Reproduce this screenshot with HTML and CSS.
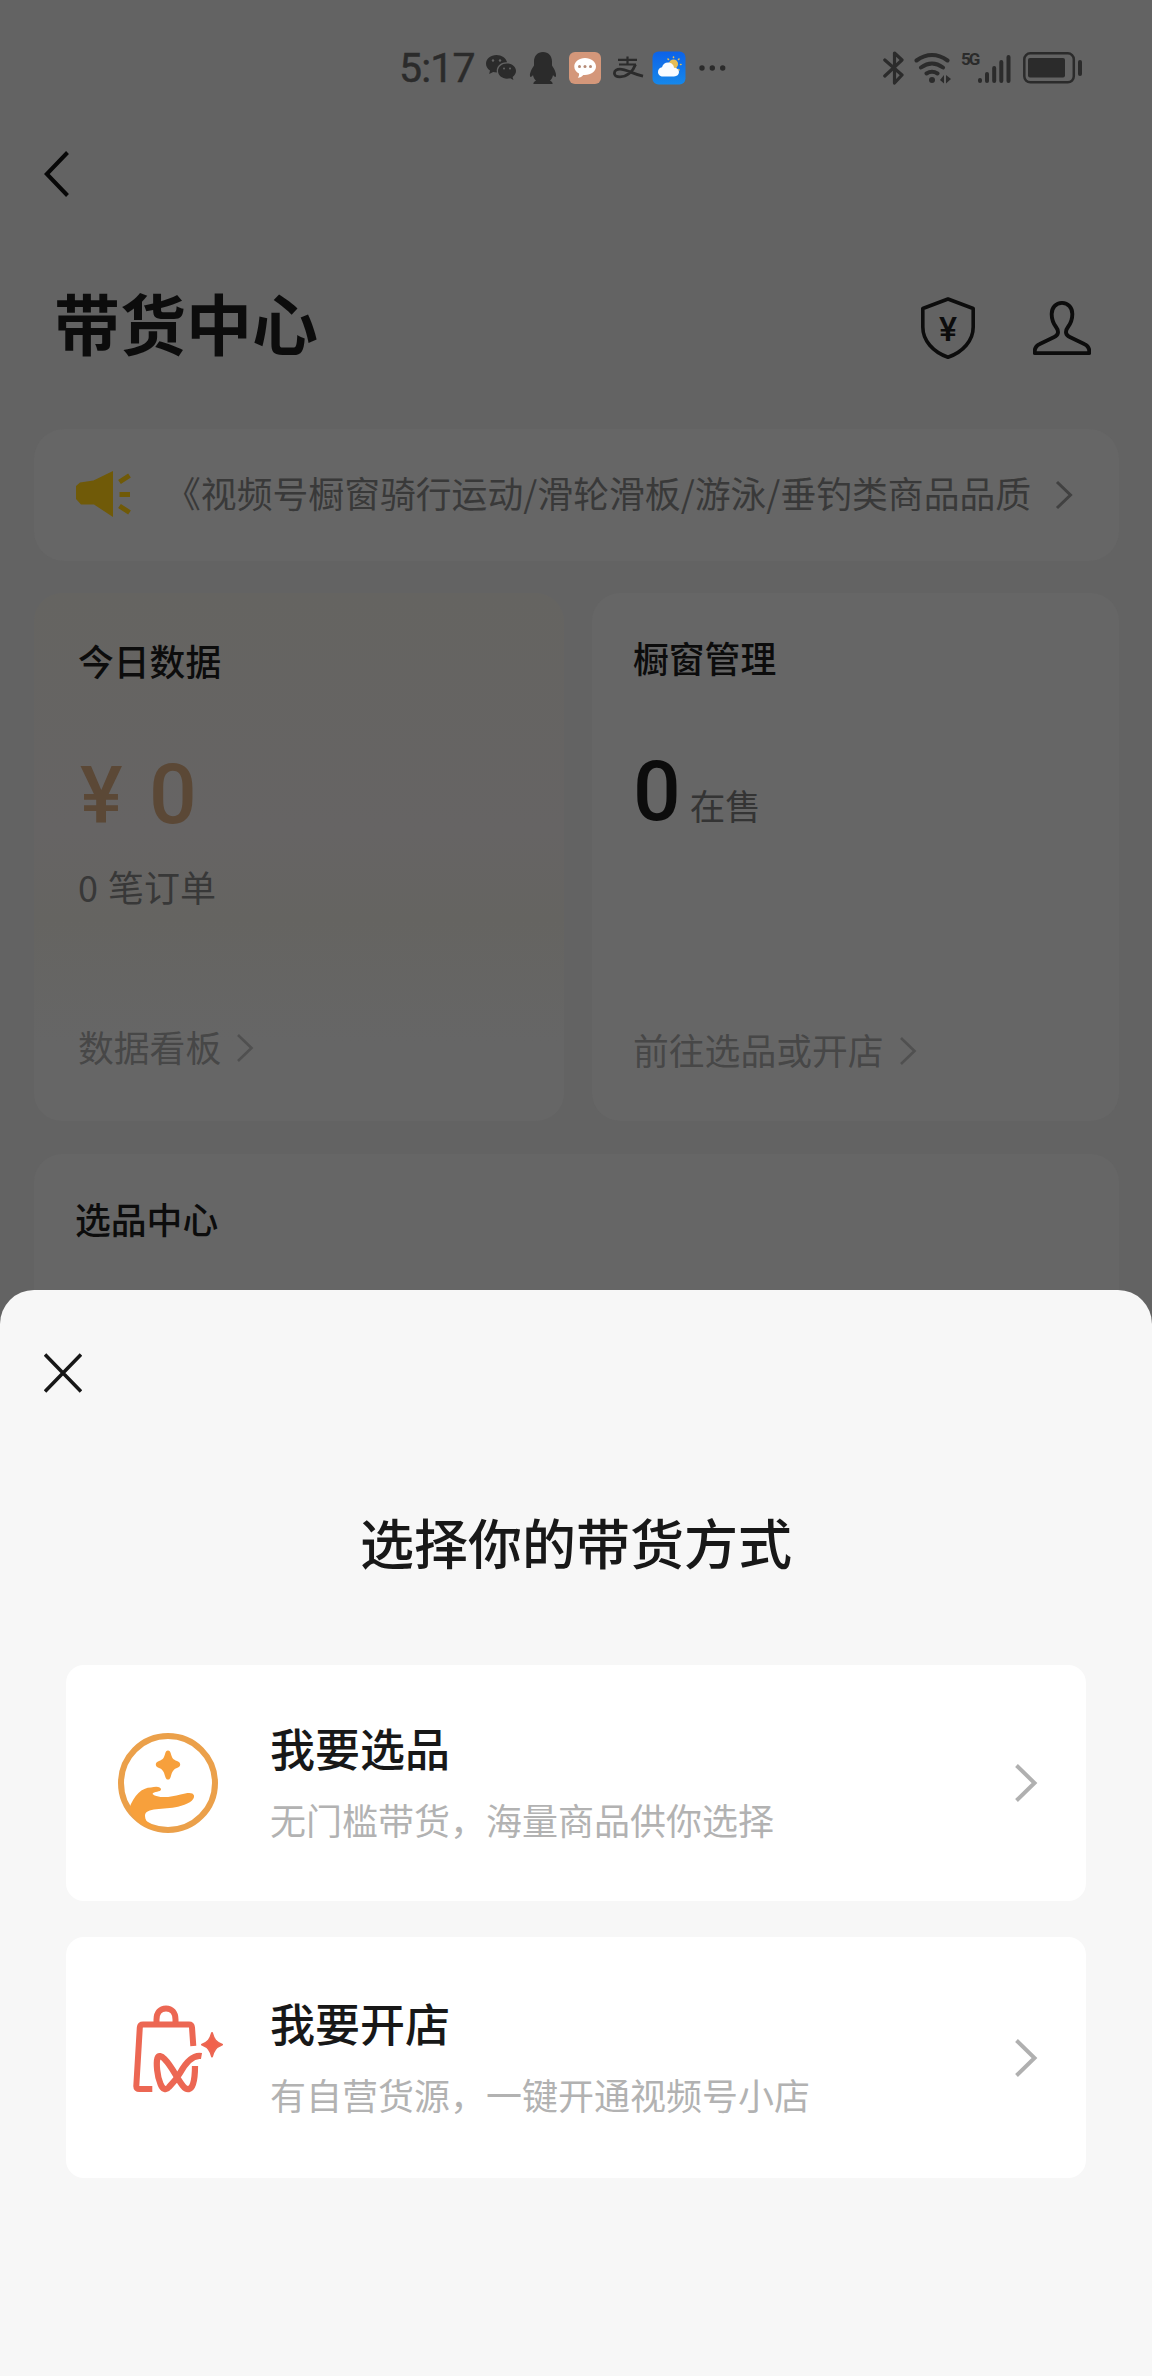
FILE: index.html
```html
<!DOCTYPE html>
<html lang="zh-CN">
<head>
<meta charset="utf-8">
<title>带货中心</title>
<link rel="stylesheet" href="styles.css">
</head>
<body>
<main class="page">
  <header class="status">
    <div class="status-left">
      <span class="time">5:17</span>
      <svg class="s-wechat" width="30" height="28" viewBox="0 0 30 28"><path fill="#2b2b2b" d="M10.500 1C4.700 1 0 4.800 0 9.700c0 2.800 1.600 5.200 4 6.800L3.200 20l4-2c1.200.3 2.300.4 3.700.4-1.200-6 3.800-10.600 10.200-10.200C20 4 15.600 1 10.500 1z"/><path fill="#2b2b2b" d="M21 9.500c-5 0-9 3.400-9 7.600s4 7.600 9 7.600c1.100 0 2.200-.2 3.200-.5l3.200 1.800-.8-3c2-1.400 3.400-3.500 3.400-5.900 0-4.200-4-7.600-9-7.600z"/><g fill="#636363"><circle cx="7" cy="6.500" r="1.200"/><circle cx="14" cy="6.500" r="1.200"/><circle cx="18" cy="14.500" r="1"/><circle cx="24" cy="14.500" r="1"/></g></svg>
      <svg class="s-qq" width="28" height="34" viewBox="0 0 28 34"><path fill="#2b2b2b" d="M14 1C8.500 1 5 5 5 10.500v4C3 17.500.500 22 1 25c.3 2 2 .5 3-1 .4 2.300 1.400 4.200 3 5.700-1.700.6-2.600 1.500-2.600 3.300H23.600c0-1.800-.9-2.700-2.600-3.300 1.600-1.500 2.600-3.400 3-5.700 1 1.500 2.700 3 3 1 .5-3-2-7.500-4-10.500v-4C23 5 19.500 1 14 1z"/></svg>
      <svg class="s-chat" width="32" height="32" viewBox="0 0 32 32"><rect width="32" height="32" rx="6" fill="#d4977a"/><path fill="#fff" d="M16 6C10 6 5.300 9.800 5.300 14.500c0 3 1.700 5.600 4.700 7.100.3 1.500-.2 3-1.200 4.100 2.500-.2 4.300-1.200 5.500-2.800 7.200.6 12.700-3.300 12.700-8.400C27 9.800 22 6 16 6z"/><g fill="#b58a75"><circle cx="10.500" cy="14.500" r="1.500"/><circle cx="16" cy="14.500" r="1.500"/><circle cx="21.500" cy="14.500" r="1.500"/></g></svg>
      <svg class="s-pay" width="31" height="24" viewBox="0 0 31 24" fill="none" stroke="#2b2b2b"><path stroke-width="2.200" d="M5 3.800h19M14.500 .5v8M6 8.500h17"/><path stroke-width="2.800" d="M22.500 8.500C20 15.500 14 20.800 7 20.800c-4 0-5.600-1.600-5.600-3.600C1.400 14.500 4 13.200 7 13.200c6 0 12 4.300 23 7"/></svg>
      <svg class="s-weather" width="34" height="34" viewBox="0 0 34 34"><defs><linearGradient id="sky" x1="0" y1="0" x2="0" y2="1"><stop offset="0" stop-color="#0c62e8"/><stop offset="1" stop-color="#1688ea"/></linearGradient></defs><rect x=".5" y=".5" width="33" height="33" rx="6" fill="url(#sky)"/><circle cx="21.500" cy="13" r="4.600" fill="#e5bd55"/><g stroke="#e5bd55" stroke-width="1.600" stroke-linecap="round"><path d="M21.500 6.500V6M26.500 8.500l.5-.5M16.500 8.500L16 8M28.500 13.500h.5M26.500 18.500l.5.500"/></g><path fill="#f7fbff" d="M11 25.500c-3 0-5-2-5-4.600 0-2.400 1.700-4.300 4-4.600.8-3 3-4.800 6-4.800 3.200 0 5.700 2.200 6 5.200 3 0 5 1.900 5 4.400s-2 4.400-5 4.400z"/></svg>
      <svg class="s-more" width="27" height="6" viewBox="0 0 27 6" fill="#2b2b2b"><circle cx="3" cy="3" r="2.700"/><circle cx="13.300" cy="3" r="2.700"/><circle cx="23.700" cy="3" r="2.700"/></svg>
    </div>
    <div class="status-right">
      <svg class="s-bt" width="22" height="34" viewBox="0 0 22 34" fill="none" stroke="#2b2b2b" stroke-width="3.200" stroke-linecap="round" stroke-linejoin="round"><path d="M1.800 9L19 24l-7.500 8V2L19 9 1.800 25"/></svg>
      <svg class="s-wifi" width="37" height="32" viewBox="0 0 37 32" fill="none" stroke="#2b2b2b" stroke-width="4" stroke-linecap="round"><path d="M2.500 8.500Q18 -2.500 33.500 8.500M7 15.500Q18 7.500 29 15.500M12.500 21.500Q18 18 23.500 21.500"/><circle cx="18" cy="28" r="3" fill="#2b2b2b" stroke="none"/><path fill="#2b2b2b" stroke="none" d="M30 23v8.500L26 28zM32 23v8.500l5-4.500z"/></svg>
      <div class="s-signal"><span class="net">5G</span><svg width="34" height="34" viewBox="0 0 34 34"><g stroke="#2b2b2b" stroke-width="4" stroke-linecap="round"><path d="M2 30v-1M9 30v-7M16.200 30V17M23.300 30V11M30.500 30V6"/></g></svg></div>
      <svg class="s-battery" width="60" height="32" viewBox="0 0 60 32"><rect x="1.300" y="1.300" width="49.500" height="29" rx="6" fill="none" stroke="#2b2b2b" stroke-width="2.500"/><rect x="5" y="6" width="37" height="19.500" rx="2" fill="#2b2b2b"/><path d="M57 10v12" stroke="#2b2b2b" stroke-width="4" stroke-linecap="round"/></svg>
    </div>
  </header>

  <nav class="nav">
    <svg width="26" height="48" viewBox="0 0 26 48" fill="none" stroke="#070707" stroke-width="4"><path d="M23.500 2.500L2.800 24l20.700 21.500"/></svg>
  </nav>

  <div class="titlebar">
    <h1>带货中心</h1>
    <div class="title-icons">
      <svg width="56" height="64" viewBox="0 0 56 64"><path fill="none" stroke="#0c0c0c" stroke-width="3.600" stroke-linejoin="round" d="M28 3l25.200 9.500v18.500C53.200 44.500 43 56 28 61.200 13 56 2.800 44.500 2.800 31V12.500z"/><text class="shield-yen" x="28" y="45" text-anchor="middle">¥</text></svg>
      <svg width="58" height="56" viewBox="0 0 60 58"><path fill="none" stroke="#0c0c0c" stroke-width="4" stroke-linejoin="round" d="M30 3c-6.500 0-10.700 5-10.700 11.500 0 6 1.700 9.800 4.500 13.500 3.500 4.600 2.300 8.400-1.800 10.300L7 45.500c-4 1.800-5.800 4.500-5.200 9.500h56.400c.6-5-1.200-7.700-5.200-9.500L38 38.300c-4.100-1.900-5.300-5.700-1.800-10.300 2.800-3.700 4.500-7.500 4.500-13.500C40.700 8 36.500 3 30 3z"/></svg>
    </div>
  </div>

  <section class="notice">
    <svg class="horn" width="56" height="48" viewBox="0 0 56 48"><path fill="#705a08" d="M38 1v46L19 34.500H6L1 29V16l4-3.500 13.500-2z"/><path d="M44.500 12l10-6.500M44.500 24.500H55M44.500 36l10 6.500" stroke="#705a08" stroke-width="5"/></svg>
    <p class="notice-text">《视频号橱窗骑行运动/滑轮滑板/游泳/垂钓类商品品质</p>
    <svg class="chev-notice" width="18" height="30" viewBox="0 0 18 30" fill="none" stroke="#414141" stroke-width="3"><path d="M2 2l13.500 13L2 28"/></svg>
  </section>

  <div class="cards">
    <section class="card card-today">
      <h2>今日数据</h2>
      <p class="amount"><span class="yen">¥</span><span>0</span></p>
      <p class="orders">0 笔订单</p>
      <a class="more">数据看板<svg width="18" height="30" viewBox="0 0 18 30" fill="none" stroke="#505050" stroke-width="2.600"><path d="M2 2l13.500 13L2 28"/></svg></a>
    </section>
    <section class="card card-window">
      <h2>橱窗管理</h2>
      <p class="amount"><span>0</span><span class="unit">在售</span></p>
      <a class="more">前往选品或开店<svg width="18" height="30" viewBox="0 0 18 30" fill="none" stroke="#505050" stroke-width="2.600"><path d="M2 2l13.500 13L2 28"/></svg></a>
    </section>
  </div>

  <section class="card card-center"><h2>选品中心</h2></section>
</main>

<section class="sheet">
  <svg class="close" width="38" height="40" viewBox="0 0 38 40" stroke="#171717" stroke-width="3.600"><path d="M1 1.500l36 37M37 1.500L1 38.500"/></svg>
  <h2 class="sheet-title">选择你的带货方式</h2>
  <div class="options">
    <a class="option">
      <svg class="option-icon" width="108" height="108" viewBox="0 0 108 108"><circle cx="54" cy="54" r="47" fill="none" stroke="#eba04a" stroke-width="6"/><path fill="#f7a03c" d="M54 21.500c1.500 0 2.300 1 2.800 3 1.200 4.500 2.200 6 6.200 7.500 2.300.9 3.200 2 3.200 3.500s-.9 2.600-3.200 3.500c-4 1.500-5 4-6.200 8.500-.5 2-1.300 3-2.800 3s-2.300-1-2.800-3c-1.200-4.500-2.200-7-6.200-8.500-2.300-.9-3.200-2-3.200-3.500s.9-2.600 3.200-3.500c4-1.500 5-3 6.200-7.500.5-2 1.300-3 2.800-3z"/><path fill="#f7a03c" d="M15 80C20 66 28 58.500 37 58.500c5-1.200 10-1 10 2 0 2.800-7.500 1.500-8.500 4.500 5 4.500 18 3.500 28 .5 7-2 12.500-2.500 13.500 1 1 5-7 9-16 11.300C50 81 31 78 31 87c0 7 8 10.500 16 13C33 100 20 93 15 80z"/></svg>
      <div class="option-text"><h3>我要选品</h3><p>无门槛带货，海量商品供你选择</p></div>
      <svg class="option-chev" width="24" height="40" viewBox="0 0 24 40" fill="none" stroke="#b0b0b0" stroke-width="4"><path d="M2.500 2.500L20.500 20l-18 17.500"/></svg>
    </a>
    <a class="option option-shop">
      <svg class="option-icon" width="110" height="108" viewBox="0 0 110 108" fill="none" stroke="#ec6753" stroke-width="6" stroke-linejoin="round"><path d="M42.500 26v-3.500c0-7 4-11 9.500-11s9.500 4 9.500 11V26"/><path d="M79.300 49L78 30.500c-.2-2-1.200-3-3-3H29c-2 0-3 1-3.200 3L22.300 89c-.1 2 1 3 3 3h13"/><path stroke-width="6.200" d="M87.500 59C79 57.500 72 65 66 76c-4 7-8 11-11 14-3 4-6.500 2-8.500-3-3.500-8-4.500-21-3-26 1-3 4-2.500 7 1 8 8 12 19 18.500 27 4 5 8 4 10-2 1.700-5 2-11 2-18"/><path fill="#f1614c" stroke-width="2" d="M98 36c2 7 3.500 9 10 11.700C101.500 50.500 100 52.500 98 59.500c-2-7-3.500-9-10-11.800C94.500 45 96 43 98 36z"/></svg>
      <div class="option-text"><h3>我要开店</h3><p>有自营货源，一键开通视频号小店</p></div>
      <svg class="option-chev" width="24" height="40" viewBox="0 0 24 40" fill="none" stroke="#b0b0b0" stroke-width="4"><path d="M2.500 2.500L20.500 20l-18 17.500"/></svg>
    </a>
  </div>
</section>
</body>
</html>
```

FILE: styles.css
```css
* { box-sizing: border-box; margin: 0; padding: 0; }

body {
  width: 1152px;
  height: 2376px;
  overflow: hidden;
  display: flex;
  flex-direction: column;
  background: #636363;
  font-family: "Noto Sans CJK SC", sans-serif;
  color: #0c0c0c;
}

svg { display: block; flex: none; }
h1, h2, h3, p { white-space: nowrap; }

.page { flex: none; height: 1330px; overflow: hidden; }

/* Status bar */
.status {
  height: 135px;
  padding: 0 69px 0 399px;
  display: flex;
  justify-content: space-between;
  align-items: center;
}
.status-left, .status-right { display: flex; align-items: center; }
.time {
  width: 87px;
  font: 400 41px/48px Roboto, sans-serif;
  letter-spacing: -0.8px;
  color: #2b2b2b;
  -webkit-text-stroke: 0.5px #2b2b2b;
}
.s-qq { margin-left: 13px; }
.s-chat { margin-left: 12px; }
.s-pay { margin-left: 12px; }
.s-weather { margin-left: 8px; }
.s-more { margin-left: 13px; }
.s-wifi { margin-left: 9px; }
.s-signal { display: flex; width: 51px; margin-left: 10px; }
.s-battery { margin-left: 11px; }
.net {
  width: 17px;
  margin-top: -3px;
  font: 700 17px/22px Roboto, sans-serif;
  letter-spacing: -2px;
  color: #2b2b2b;
}

.nav { height: 78px; padding-left: 44px; display: flex; align-items: center; }

/* Page title */
.titlebar {
  height: 216px;
  padding: 0 61px 0 54px;
  display: flex;
  justify-content: space-between;
  align-items: center;
}
.titlebar h1 { font-size: 66px; line-height: 80px; font-weight: 700; }
.title-icons { display: flex; align-items: center; gap: 57px; margin-top: 13px; }
.shield-yen { font: 500 34px Roboto, sans-serif; fill: #0c0c0c; }

/* Notice strip */
.notice {
  height: 132px;
  margin: 0 33px 0 34px;
  padding: 0 45px 0 41px;
  border-radius: 30px;
  background: #666;
  display: flex;
  align-items: center;
}
.horn { margin-top: -2px; }
.notice-text {
  width: 865px;
  margin: -7px 25px 0 34px;
  overflow: hidden;
  font-size: 35.85px;
  line-height: 50px;
  color: #393939;
}

/* Data cards */
.cards { display: flex; gap: 28px; margin: 32px 33px 33px 34px; }
.card { background: #666; border-radius: 28px; }
.cards .card { flex: 1; height: 528px; padding: 0 44px; }
.card h2 { font-size: 35.8px; line-height: 50px; font-weight: 500; }
.card-today { background: linear-gradient(#656461, #666464 45%, #656461 62%, #666 85%); }
.card-today h2 { margin-top: 42px; }
.card-window h2 { margin-top: 39px; }
.cards .card-window { padding-left: 41px; }
.amount {
  height: 90px;
  margin-top: 65px;
  display: flex;
  align-items: baseline;
  font: 500 84px/90px Roboto, sans-serif;
}
.card-today .amount { margin-left: 2px; color: #5b4836; }
.yen { width: 69px; font-size: 80px; }
.card-window .amount { height: 151px; }
.unit {
  margin-left: 9px;
  font: 400 35.6px/50px "Noto Sans CJK SC", sans-serif;
  color: #343434;
}
.orders {
  margin-top: 21px;
  font-size: 36px;
  line-height: 50px;
  word-spacing: 2px;
  color: #383838;
}
.more {
  display: flex;
  align-items: center;
  gap: 15px;
  font-size: 35.8px;
  line-height: 50px;
  color: #474747;
}
.more svg { margin-top: 4px; }
.card-today .more { margin-top: 110px; }
.card-window .more { margin-top: 126px; }
.card-center { height: 220px; margin: 0 33px 0 34px; padding: 39px 41px; }

/* Bottom sheet */
.sheet {
  position: relative;
  flex: 1;
  margin-top: -40px;
  padding: 63px 66px 0;
  border-radius: 34px 34px 0 0;
  background: #f7f7f7;
  color: #181818;
}
.close { margin-left: -22px; }
.sheet-title {
  margin-top: 109px;
  font-size: 54px;
  line-height: 80px;
  font-weight: 500;
  text-align: center;
}
.options { display: flex; flex-direction: column; gap: 36px; margin-top: 83px; }
.option {
  height: 236px;
  padding: 0 48px 0 48px;
  border-radius: 18px;
  background: #fff;
  display: flex;
  align-items: center;
}
.option-shop { height: 241px; }
.option-shop .option-icon { margin: -14px -2px 0 0; }
.option-text { flex: 1; margin: 1px 0 0 48px; }
.option-text h3 { font-size: 45px; line-height: 72px; font-weight: 500; }
.option-text p { font-size: 36px; line-height: 71px; color: #b2b2b2; }
```
